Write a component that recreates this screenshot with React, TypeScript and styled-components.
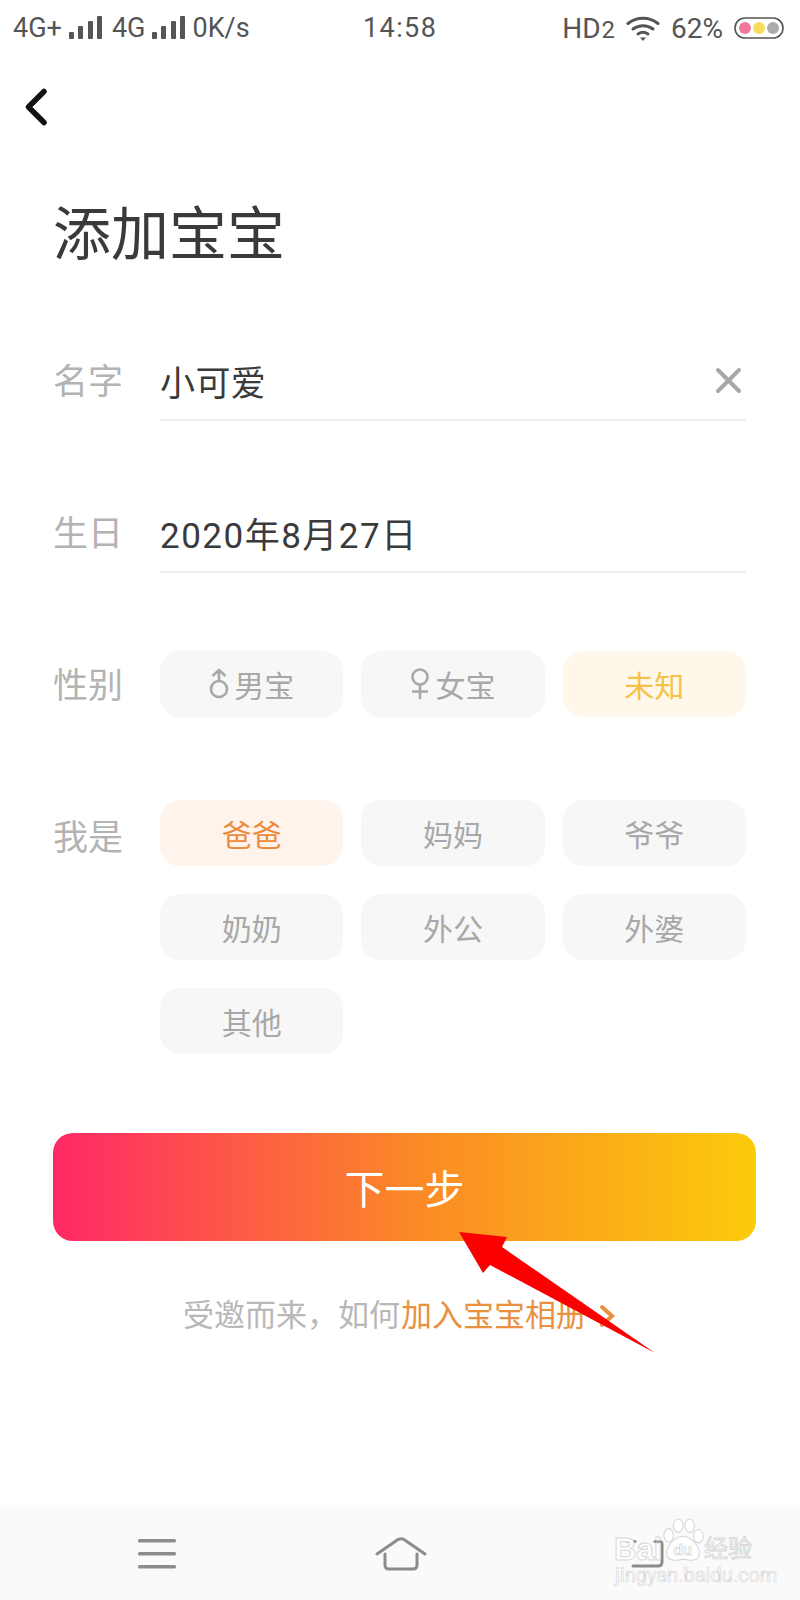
import { FC } from 'react';
import styled, { createGlobalStyle } from 'styled-components';

const FONT = '"Roboto", "Noto Sans CJK SC", sans-serif';

const GlobalStyle = createGlobalStyle`
	html, body {
		margin: 0;
		padding: 0;
		background: #fff;
	}
	body {
		font-family: ${FONT};
	}
`;

const StyledPage = styled.div`
	position: relative;
	width: 800px;
	height: 1600px;
	overflow: hidden;
	display: flex;
	flex-direction: column;
	background: #fff;
`;

const StyledStatusBar = styled.div`
	position: relative;
	height: 56px;
	display: flex;
	align-items: center;
	justify-content: space-between;
	padding: 0 16px 0 13px;
	color: #555;
`;

const StyledStatusGroup = styled.div`
	display: flex;
	align-items: center;
	gap: 7px;
	font-size: 27px;
`;

const StyledSecondSim = styled.span`
	margin-left: 3px;
`;

const StyledTime = styled.div`
	position: absolute;
	left: 363px;
	top: 13px;
	font-size: 27px;
	line-height: 30px;
	letter-spacing: 1.4px;
`;

const StyledStatusRight = styled.div`
	display: flex;
	align-items: center;
	gap: 11px;
	font-size: 28px;
`;

const StyledSub = styled.span`
	font-size: 24px;
	margin-left: 1px;
`;

const StyledBack = styled.div`
	height: 102px;
	padding-left: 24px;
	display: flex;
	align-items: center;
`;

const StyledMain = styled.div`
	flex: 1;
	padding: 0 44px 0 53px;
	display: flex;
	flex-direction: column;
`;

const StyledTitle = styled.h1`
	margin: 36px 0 0;
	font-size: 58px;
	line-height: 82px;
	font-weight: 400;
	color: #3a3a3a;
`;

const StyledForm = styled.div`
	margin-top: 71px;
	padding-right: 10px;
	display: flex;
	flex-direction: column;
`;

const StyledRow = styled.div<{ $gap: number }>`
	display: flex;
	align-items: flex-start;
	margin-top: ${({ $gap }) => $gap}px;
`;

const StyledLabel = styled.div<{ $drop?: number }>`
	width: 107px;
	flex: none;
	padding-top: ${({ $drop }) => $drop ?? 3}px;
	font-size: 35px;
	line-height: 66px;
	color: #b3b3b3;
`;

const StyledField = styled.div<{ $spaced?: boolean }>`
	flex: 1;
	height: 74px;
	padding-bottom: 6px;
	display: flex;
	align-items: center;
	justify-content: space-between;
	border-bottom: 2px solid #eeeeee;
	box-sizing: border-box;
	font-size: 35px;
	letter-spacing: ${({ $spaced }) => ($spaced ? '1.5px' : '0.4px')};
	color: #3a3a3a;
`;

const StyledChips = styled.div`
	flex: 1;
	display: grid;
	grid-template-columns: repeat(3, 1fr);
	column-gap: 18px;
	row-gap: 28px;
`;

const StyledChip = styled.div<{ $tone?: 'orange' | 'yellow' }>`
	height: 66px;
	border-radius: 20px;
	display: flex;
	align-items: center;
	justify-content: center;
	gap: 5px;
	font-size: 30px;
	background: ${({ $tone }) =>
		$tone === 'orange' ? '#fff4ec' : $tone === 'yellow' ? '#fff8ea' : '#f7f7f7'};
	color: ${({ $tone }) =>
		$tone === 'orange' ? '#ec8b3c' : $tone === 'yellow' ? '#f4c246' : '#a8a8a8'};
`;

const StyledNext = styled.button`
	margin-top: 79px;
	height: 108px;
	border: 0;
	border-radius: 20px;
	background: linear-gradient(90deg, #ff2866 0%, #fb8a26 52%, #fbcb0a 100%);
	color: #fff;
	font-family: ${FONT};
	font-size: 40px;
	padding: 0;
`;

const StyledInvite = styled.div`
	margin-top: 53px;
	padding-left: 130px;
	font-size: 31px;
	line-height: 44px;
	color: #b8b8b8;
	display: flex;
	align-items: center;
`;

const StyledInviteLink = styled.span`
	margin-left: 1px;
	color: #e8913f;
	display: flex;
	align-items: center;
	gap: 12px;
`;

const StyledNavBar = styled.div`
	flex: none;
	height: 93px;
	background: #fafafa;
	display: flex;
	align-items: center;
	justify-content: space-between;
	padding: 0 136px 0 138px;
`;

const StyledArrow = styled.svg`
	position: absolute;
	left: 0;
	top: 0;
	pointer-events: none;
`;

const StyledMark = styled.div`
	position: absolute;
	left: 614px;
	top: 1516px;
	width: 145px;
	height: 70px;
	color: #fff;
	-webkit-text-stroke: 1px #d8d8d8;
`;

const StyledMarkBai = styled.span`
	position: absolute;
	left: 0;
	top: 20px;
	font-family: 'Liberation Sans', sans-serif;
	font-weight: 700;
	font-size: 31px;
	line-height: 28px;
`;

const StyledMarkJing = styled.span`
	position: absolute;
	left: 90px;
	top: 19px;
	font-size: 24px;
	line-height: 28px;
	white-space: nowrap;
`;

const StyledMarkUrl = styled.span`
	position: absolute;
	left: 1px;
	top: 49px;
	font-size: 20px;
	line-height: 20px;
	white-space: nowrap;
	-webkit-text-stroke: 0.6px #d4d4d4;
`;

const StyledPaw = styled.svg`
	position: absolute;
	left: 47px;
	top: 0;
`;

const StyledPawText = styled.text`
	font-family: 'Liberation Sans', sans-serif;
	font-size: 16px;
	font-weight: 700;
	fill: #fff;
	stroke: #d8d8d8;
	stroke-width: 0.8px;
`;

const Signal: FC = () => (
	<svg width="33" height="24" viewBox="0 0 33 24" fill="#555">
		<rect x="0" y="16" width="5" height="7" rx="1" />
		<rect x="9" y="10" width="5" height="13" rx="1" />
		<rect x="19" y="5" width="5" height="18" rx="1" />
		<rect x="28" y="0" width="5" height="23" rx="1" />
	</svg>
);

const Wifi: FC = () => (
	<svg width="34" height="26" viewBox="0 0 34 26" fill="none" stroke="#555" strokeWidth="3" strokeLinecap="round">
		<path d="M2 8.5C10.5 1.5 23.5 1.5 32 8.5" />
		<path d="M7 14C13 9.5 21 9.5 27 14" />
		<path d="M12 19C15 17 19 17 22 19" />
		<path d="M14 22.5L20 22.5L17 26Z" fill="#555" stroke="none" />
	</svg>
);

const Battery: FC = () => (
	<svg width="50" height="22" viewBox="0 0 50 22">
		<rect x="1" y="1" width="48" height="20" rx="10" fill="#fff" stroke="#555" strokeWidth="1.6" />
		<circle cx="11" cy="11" r="6" fill="#f0789a" />
		<circle cx="25" cy="11" r="6" fill="#f8dc5c" />
		<circle cx="39" cy="11" r="6" fill="#ababab" />
	</svg>
);

const Male: FC = () => (
	<svg width="20" height="32" viewBox="0 0 20 32" fill="none" stroke="#a8a8a8" strokeWidth="2.6">
		<circle cx="10" cy="21" r="8" />
		<path d="M10 13V2M3.5 8L10 2L16.500 8" />
	</svg>
);

const Female: FC = () => (
	<svg width="20" height="32" viewBox="0 0 20 32" fill="none" stroke="#a8a8a8" strokeWidth="2.6">
		<circle cx="10" cy="9" r="7.500" />
		<path d="M10 16.500V31M2 23.500H18" />
	</svg>
);

const relations = ['妈妈', '爷爷', '奶奶', '外公', '外婆', '其他'];

export default function App() {
	return (
		<StyledPage>
			<GlobalStyle />
			<StyledStatusBar>
				<StyledStatusGroup>
					<span>4G+</span>
					<Signal />
					<StyledSecondSim>4G</StyledSecondSim>
					<Signal />
					<span>0K/s</span>
				</StyledStatusGroup>
				<StyledTime>14:58</StyledTime>
				<StyledStatusRight>
					<span>
						HD<StyledSub>2</StyledSub>
					</span>
					<Wifi />
					<span>62%</span>
					<Battery />
				</StyledStatusRight>
			</StyledStatusBar>

			<StyledBack>
				<svg width="24" height="38" viewBox="0 0 24 38" fill="none" stroke="#111" strokeWidth="5.500" strokeLinecap="round" strokeLinejoin="round">
					<path d="M20 3.500L4.500 19L20 34.500" />
				</svg>
			</StyledBack>

			<StyledMain>
				<StyledTitle>添加宝宝</StyledTitle>

				<StyledForm>
					<StyledRow $gap={0}>
						<StyledLabel>名字</StyledLabel>
						<StyledField>
							小可爱
							<svg width="34" height="34" viewBox="0 0 34 34" fill="none" stroke="#a8a8a8" strokeWidth="4" strokeLinecap="round">
								<path d="M6 7L27 28M27 7L6 28" />
							</svg>
						</StyledField>
					</StyledRow>

					<StyledRow $gap={78}>
						<StyledLabel>生日</StyledLabel>
						<StyledField $spaced>2020年8月27日</StyledField>
					</StyledRow>

					<StyledRow $gap={78}>
						<StyledLabel>性别</StyledLabel>
						<StyledChips>
							<StyledChip>
								<Male />
								男宝
							</StyledChip>
							<StyledChip>
								<Female />
								女宝
							</StyledChip>
							<StyledChip $tone="yellow">未知</StyledChip>
						</StyledChips>
					</StyledRow>

					<StyledRow $gap={80}>
						<StyledLabel $drop={6}>我是</StyledLabel>
						<StyledChips>
							<StyledChip $tone="orange">爸爸</StyledChip>
							{relations.map((relation) => (
								<StyledChip key={relation}>{relation}</StyledChip>
							))}
						</StyledChips>
					</StyledRow>
				</StyledForm>

				<StyledNext>下一步</StyledNext>

				<StyledInvite>
					受邀而来，如何
					<StyledInviteLink>
						加入宝宝相册
						<svg width="16" height="24" viewBox="0 0 16 24" fill="none" stroke="#e8913f" strokeWidth="4" strokeLinecap="round">
							<path d="M3 3L13 12L3 21" />
						</svg>
					</StyledInviteLink>
				</StyledInvite>
			</StyledMain>

			<StyledNavBar>
				<svg width="38" height="30" viewBox="0 0 38 30" fill="#8c8c8c">
					<rect x="0" y="0" width="38" height="3.500" rx="1.500" />
					<rect x="0" y="13" width="38" height="3.500" rx="1.500" />
					<rect x="0" y="26" width="38" height="3.500" rx="1.500" />
				</svg>
				<svg width="52" height="34" viewBox="0 0 52 34" fill="none" stroke="#8c8c8c" strokeWidth="3" strokeLinecap="round" strokeLinejoin="round">
					<path d="M2 17L23 2.500C25 1.500 27 1.500 29 2.500L50 17" />
					<path d="M10 17V28C10 31 11.500 32 14 32H38C40.500 32 42 31 42 28V17" />
				</svg>
				<svg width="38" height="28" viewBox="0 0 38 28" fill="none" stroke="#8c8c8c" strokeWidth="3" strokeLinecap="round" strokeLinejoin="round">
					<path d="M7 26H32C34.500 26 36 24.500 36 22V4C36 2.500 35 1.500 33 1.500H29" />
					<path d="M2 1.500H9" />
				</svg>
			</StyledNavBar>

			<StyledArrow width="800" height="1600" viewBox="0 0 800 1600">
				<polygon points="459,1232 507,1237 502,1247 655,1353 490,1265 483,1273" fill="#fa0000" />
			</StyledArrow>

			<StyledMark>
				<StyledMarkBai>Bai</StyledMarkBai>
				<StyledPaw width="44" height="50" viewBox="0 0 46 50" fill="#fff" stroke="#d8d8d8" strokeWidth="1.200">
					<ellipse cx="8" cy="19" rx="5" ry="7" />
					<ellipse cx="18" cy="9" rx="5" ry="7" />
					<ellipse cx="30" cy="9" rx="5" ry="7" />
					<ellipse cx="39" cy="20" rx="5" ry="7" />
					<path d="M23 20C31 20 40 30 40 38C40 46 31 46 23 44C15 46 6 46 6 38C6 30 15 20 23 20Z" />
					<StyledPawText x="13" y="40">du</StyledPawText>
				</StyledPaw>
				<StyledMarkJing>经验</StyledMarkJing>
				<StyledMarkUrl>jingyan.baidu.com</StyledMarkUrl>
			</StyledMark>
		</StyledPage>
	);
}
